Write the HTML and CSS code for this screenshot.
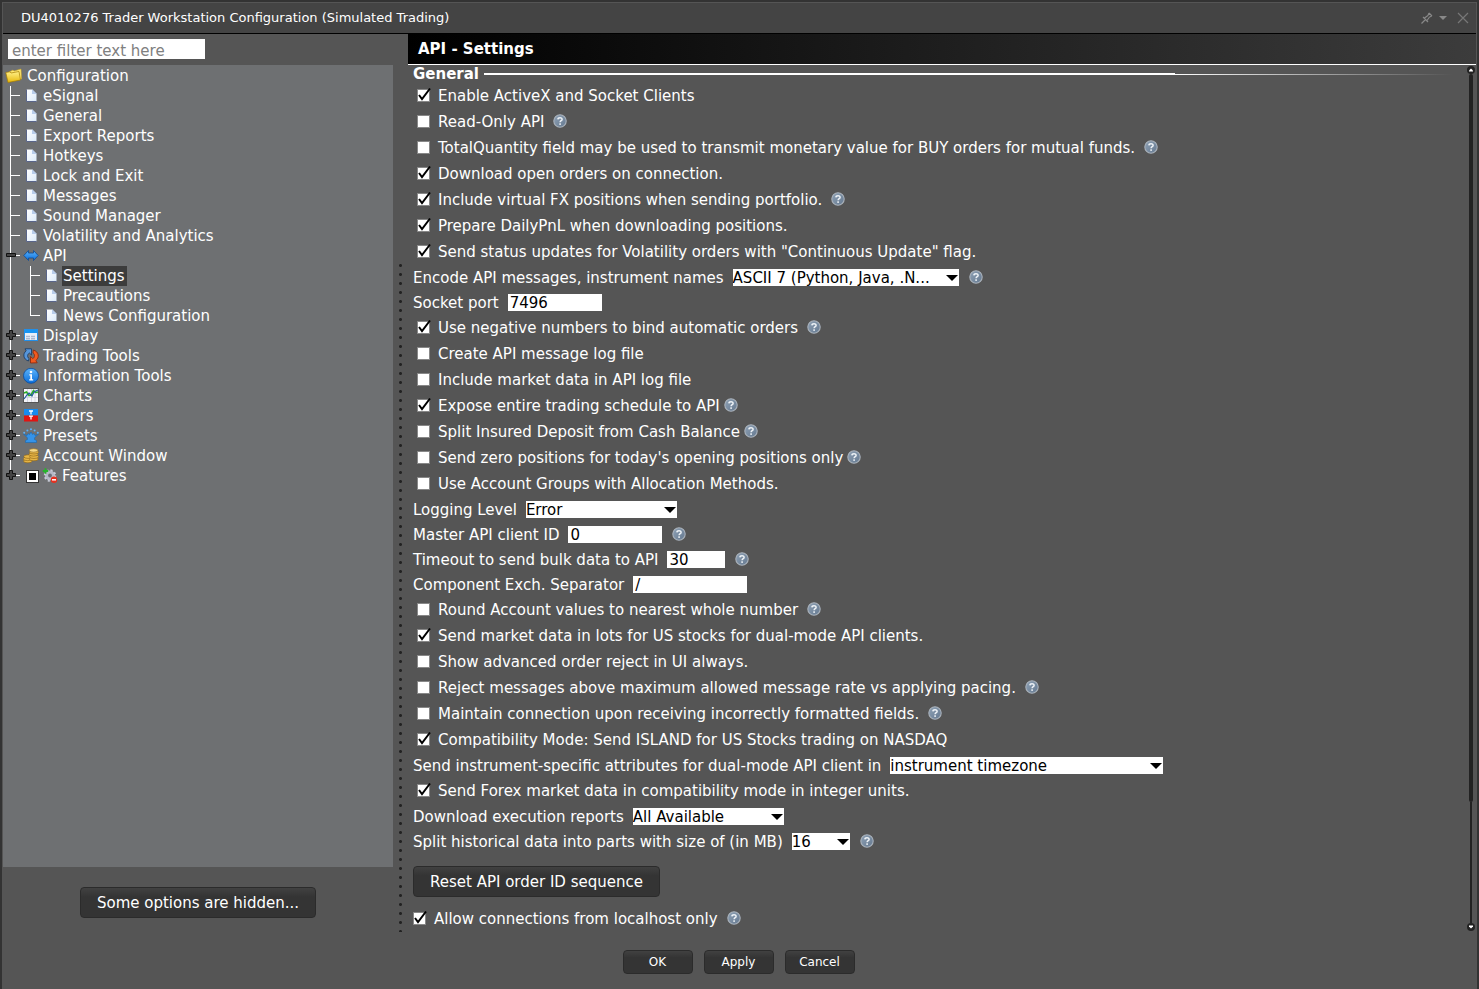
FILE: index.html
```html
<!DOCTYPE html>
<html lang="en">
<head>
<meta charset="utf-8">
<title>Trader Workstation Configuration</title>
<link rel="stylesheet" href="styles.css">
</head>
<body>
<svg class="defs" aria-hidden="true">
  <defs>
    <linearGradient id="g-help" x1="0" y1="0" x2="1" y2="1"><stop offset="0" stop-color="#8fa2b6"/><stop offset="1" stop-color="#64788f"/></linearGradient>
    <linearGradient id="g-page" x1="0" y1="0" x2="1" y2="1"><stop offset="0" stop-color="#fff"/><stop offset="1" stop-color="#dcebfa"/></linearGradient>
    <linearGradient id="g-folder" x1="0" y1="0" x2="0" y2="1"><stop offset="0" stop-color="#fff08a"/><stop offset="1" stop-color="#e8b90c"/></linearGradient>
    <linearGradient id="g-blue" x1="0" y1="0" x2="0" y2="1"><stop offset="0" stop-color="#5db4fa"/><stop offset="1" stop-color="#0b6fdc"/></linearGradient>
  </defs>
  <symbol id="help" viewBox="0 0 14 14"><circle cx="7" cy="7" r="6.2" fill="url(#g-help)" stroke="#aab2bb" stroke-width="1.1"/><path d="M4.9 5.4C5 3.3 9.1 3.2 9.1 5.4 9.1 6.7 7.1 6.7 7.1 8.3" fill="none" stroke="#eef2f6" stroke-width="1.5"/><rect x="6.3" y="9.3" width="1.6" height="1.6" fill="#eef2f6"/></symbol>
  <symbol id="page" viewBox="0 0 16 16"><path d="M3.5 1.5H9L13.5 6V13.5H3.5Z" fill="url(#g-page)"/><path d="M3.5 1.5V13.5H13.5" fill="none" stroke="#59658a"/><path d="M9 1V6H14Z" fill="#b9cdea"/></symbol>
  <symbol id="folder" viewBox="0 0 18 16"><path d="M4 4L8 2 9 3 16 1 16.5 11 5 13Z" fill="#ffe873" stroke="#c9a227" stroke-width=".6"/><path d="M.8 4.5L5 3.8 6 5 14 3.5 15.5 12 3 14.5Z" fill="url(#g-folder)" stroke="#a67c00" stroke-width=".7"/></symbol>
  <symbol id="plus" viewBox="0 0 12 12"><path d="M4.5 1.5H7.5V4.5H10.5V7.5H7.5V10.5H4.5V7.5H1.5V4.5H4.5Z" fill="#444" stroke="#111"/></symbol>
  <symbol id="minus" viewBox="0 0 12 12"><path d="M1.5 4.5H10.5V7.5H1.5Z" fill="#444" stroke="#111"/></symbol>
  <symbol id="api" viewBox="0 0 16 16"><path d="M.8 7.5L5.5 2.5V5H10.5V2.5L15.2 7.5 10.5 12.5V10H5.5V12.5Z" fill="url(#g-blue)" stroke="#194f91" stroke-width=".9"/></symbol>
  <symbol id="display" viewBox="0 0 16 16"><rect x="1.5" y="1.5" width="13" height="11" fill="#e6eef8" stroke="#238fe8"/><rect x="2" y="2" width="12" height="3" fill="#1695f3"/><path d="M3 8.5H13M3 10.8H13" stroke="#aab8ce" stroke-width="1.5" stroke-dasharray="4 1"/></symbol>
  <symbol id="trading" viewBox="0 0 16 16"><path d="M5.5 13C.2 11.5 -.5 5.5 3.2 2.8L2 .8H8.5V7L6.4 5C4.2 6.3 4 9 6 10.5Z" fill="#5795d8" stroke="#17365e" stroke-width=".8"/><path d="M10.3 2C16 3.5 16.8 9.8 12.8 12.5L14.2 14.8 7.5 15V8.5L9.9 10.7C12 9 12 6.3 10 5Z" fill="#f05a1f" stroke="#8c2408" stroke-width=".8"/></symbol>
  <symbol id="info" viewBox="0 0 16 16"><circle cx="8" cy="7.8" r="7.5" fill="url(#g-blue)" stroke="#074b9e" stroke-width=".8"/><circle cx="8" cy="4" r="1.3" fill="#fff"/><path d="M6.3 6.3H9V11.3H10.2V12.4H6.2V11.3H7.3V7.4H6.3Z" fill="#fff"/></symbol>
  <symbol id="charts" viewBox="0 0 16 16"><rect x=".5" y=".5" width="15" height="14" fill="#f4f4f8" stroke="#555"/><path d="M4.5 1V14M8.5 1V14M12 1V14M1 5H15M1 9.5H15" stroke="#c9cbdc" stroke-width=".7"/><path d="M1 5L3.5 4 6 7.5 8 7 10.5 2.5 12.5 4.5 15 4" fill="none" stroke="#2dae23" stroke-width="1.6"/><path d="M1 11L4 7 6 5 9 8 11 4 15 2" fill="none" stroke="#235e9e" stroke-width="1.2"/></symbol>
  <symbol id="orders" viewBox="0 0 16 16"><path d="M1 1H15V7.5H1Z" fill="#168bf0"/><path d="M1 7.5H15V13.5H1Z" fill="#e01512"/><path d="M6 3H10M8 3V6.5M6 8.2H10M8 8.2V11.5" stroke="#fff" stroke-width="1.3"/></symbol>
  <symbol id="presets" viewBox="0 0 16 16"><path d="M2.5 14.5V12.5L4.5 11.5C5 9 2.5 8 .5 6.2L4 7.5 5 5.5 6.5 6.5 8 4 9.5 6.5 11 5.5 12 7.5 15.5 6.2C13.5 8 11 9 11.5 11.5L13.5 12.5V14.5Z" fill="#3593e8" stroke="#1769b4" stroke-width=".6"/><g fill="#5cb2fa"><circle cx="1.2" cy="4.8" r="1"/><circle cx="4.4" cy="2.6" r="1"/><circle cx="8" cy="1.3" r="1"/><circle cx="11.6" cy="2.6" r="1"/><circle cx="14.8" cy="4.8" r="1"/></g></symbol>
  <symbol id="account" viewBox="0 0 16 16"><g fill="#e7b646" stroke="#8a6115" stroke-width=".6"><ellipse cx="4.8" cy="13" rx="4.3" ry="1.8"/><ellipse cx="4.5" cy="10.8" rx="4.2" ry="1.8"/><ellipse cx="5" cy="8.6" rx="4.2" ry="1.8"/><ellipse cx="10.8" cy="11" rx="4.5" ry="1.8"/><ellipse cx="11" cy="8.7" rx="4.5" ry="1.8"/><ellipse cx="10.5" cy="6.3" rx="4.5" ry="1.8"/><ellipse cx="11" cy="4.2" rx="4.5" ry="1.8"/><ellipse cx="10.6" cy="2.4" rx="4.3" ry="1.8" fill="#f6d987"/></g></symbol>
  <symbol id="features" viewBox="0 0 16 16"><circle cx="8" cy="7.5" r="5" fill="#b9bcc9" stroke="#c7cad6" stroke-width="2.4" stroke-dasharray="2 1.9"/><circle cx="8" cy="7.5" r="4.4" fill="#b5b8c6"/><circle cx="8" cy="7.5" r="1.9" fill="#6b6d78"/><path d="M3.5 .3V5.7M.8 3H6.2" stroke="#25b52b" stroke-width="1.8"/><circle cx="12" cy="11.8" r="3.2" fill="#e6301f"/><path d="M10 11.8H14" stroke="#fff" stroke-width="1.5"/></symbol>
</svg>

<div class="window">
  <header class="titlebar">
    <h1>DU4010276 Trader Workstation Configuration (Simulated Trading)</h1>
    <button class="tool" type="button" aria-label="Pin"><svg width="12" height="12" viewBox="0 0 12 12"><path d="M.5 11.5L4.5 7.5M2 5L7 10M3.5 6L7 3.5M6 8.5L8.5 5M7 3.5L8 1M8.5 5L11 4M8 1L11 4" fill="none" stroke="#888" stroke-width="1.2"/></svg></button>
    <button class="tool" type="button" aria-label="Options"><svg width="8" height="12" viewBox="0 0 8 12"><path d="M0 4H8L4 8Z" fill="#888"/></svg></button>
    <button class="tool close" type="button" aria-label="Close"><svg width="12" height="12" viewBox="0 0 12 12"><path d="M1 1L11 11M11 1L1 11" stroke="#777" stroke-width="1.2"/></svg></button>
  </header>

  <div class="main">
    <aside class="sidebar">
      <div class="filter"><input type="text" placeholder="enter filter text here" aria-label="Filter"></div>
      <nav class="tree">
        <div class="node root"><svg class="ficon"><use href="#folder"/></svg><span>Configuration</span></div>
        <ul>
          <li class="node"><i class="gut"></i><svg class="icon"><use href="#page"/></svg><span>eSignal</span></li>
          <li class="node"><i class="gut"></i><svg class="icon"><use href="#page"/></svg><span>General</span></li>
          <li class="node"><i class="gut"></i><svg class="icon"><use href="#page"/></svg><span>Export Reports</span></li>
          <li class="node"><i class="gut"></i><svg class="icon"><use href="#page"/></svg><span>Hotkeys</span></li>
          <li class="node"><i class="gut"></i><svg class="icon"><use href="#page"/></svg><span>Lock and Exit</span></li>
          <li class="node"><i class="gut"></i><svg class="icon"><use href="#page"/></svg><span>Messages</span></li>
          <li class="node"><i class="gut"></i><svg class="icon"><use href="#page"/></svg><span>Sound Manager</span></li>
          <li class="node"><i class="gut"></i><svg class="icon"><use href="#page"/></svg><span>Volatility and Analytics</span></li>
          <li class="node"><i class="gut"><svg class="toggle"><use href="#minus"/></svg></i><svg class="icon"><use href="#api"/></svg><span>API</span></li>
          <li class="node"><i class="gut through"></i><i class="gut"></i><svg class="icon"><use href="#page"/></svg><span class="selected">Settings</span></li>
          <li class="node"><i class="gut through"></i><i class="gut"></i><svg class="icon"><use href="#page"/></svg><span>Precautions</span></li>
          <li class="node"><i class="gut through"></i><i class="gut last"></i><svg class="icon"><use href="#page"/></svg><span>News Configuration</span></li>
          <li class="node"><i class="gut"><svg class="toggle"><use href="#plus"/></svg></i><svg class="icon"><use href="#display"/></svg><span>Display</span></li>
          <li class="node"><i class="gut"><svg class="toggle"><use href="#plus"/></svg></i><svg class="icon"><use href="#trading"/></svg><span>Trading Tools</span></li>
          <li class="node"><i class="gut"><svg class="toggle"><use href="#plus"/></svg></i><svg class="icon"><use href="#info"/></svg><span>Information Tools</span></li>
          <li class="node"><i class="gut"><svg class="toggle"><use href="#plus"/></svg></i><svg class="icon"><use href="#charts"/></svg><span>Charts</span></li>
          <li class="node"><i class="gut"><svg class="toggle"><use href="#plus"/></svg></i><svg class="icon"><use href="#orders"/></svg><span>Orders</span></li>
          <li class="node"><i class="gut"><svg class="toggle"><use href="#plus"/></svg></i><svg class="icon"><use href="#presets"/></svg><span>Presets</span></li>
          <li class="node"><i class="gut"><svg class="toggle"><use href="#plus"/></svg></i><svg class="icon"><use href="#account"/></svg><span>Account Window</span></li>
          <li class="node"><i class="gut last"><svg class="toggle"><use href="#plus"/></svg></i><input class="partial" type="checkbox" id="features-on"><svg class="icon"><use href="#features"/></svg><label for="features-on">Features</label></li>
        </ul>
      </nav>
      <div class="hidden-note"><button class="btn" type="button">Some options are hidden...</button></div>
    </aside>
    <div class="splitter"></div>

    <main class="pane">
      <h2>API - Settings</h2>
      <div class="scroll">
        <form class="settings">
          <div class="group"><h3>General</h3><i class="rule"></i><i class="rule-tail"></i></div>
          <div class="check"><input type="checkbox" id="c1" checked><label for="c1">Enable ActiveX and Socket Clients</label></div>
          <div class="check"><input type="checkbox" id="c2"><label for="c2">Read-Only API</label><svg class="help"><use href="#help"/></svg></div>
          <div class="check"><input type="checkbox" id="c3"><label for="c3">TotalQuantity field may be used to transmit monetary value for BUY orders for mutual funds.</label><svg class="help"><use href="#help"/></svg></div>
          <div class="check"><input type="checkbox" id="c4" checked><label for="c4">Download open orders on connection.</label></div>
          <div class="check"><input type="checkbox" id="c5" checked><label for="c5">Include virtual FX positions when sending portfolio.</label><svg class="help"><use href="#help"/></svg></div>
          <div class="check"><input type="checkbox" id="c6" checked><label for="c6">Prepare DailyPnL when downloading positions.</label></div>
          <div class="check"><input type="checkbox" id="c7" checked><label for="c7">Send status updates for Volatility orders with "Continuous Update" flag.</label></div>
          <div class="field"><label for="f1">Encode API messages, instrument names</label><select id="f1" class="w-l"><option>ASCII 7 (Python, Java, .N...</option></select><svg class="help"><use href="#help"/></svg></div>
          <div class="field"><label for="f2">Socket port</label><input type="text" id="f2" class="w-s" value="7496"></div>
          <div class="check"><input type="checkbox" id="c8" checked><label for="c8">Use negative numbers to bind automatic orders</label><svg class="help"><use href="#help"/></svg></div>
          <div class="check"><input type="checkbox" id="c9"><label for="c9">Create API message log file</label></div>
          <div class="check"><input type="checkbox" id="c10"><label for="c10">Include market data in API log file</label></div>
          <div class="check"><input type="checkbox" id="c11" checked><label for="c11">Expose entire trading schedule to API</label><svg class="help near"><use href="#help"/></svg></div>
          <div class="check"><input type="checkbox" id="c12"><label for="c12">Split Insured Deposit from Cash Balance</label><svg class="help near"><use href="#help"/></svg></div>
          <div class="check"><input type="checkbox" id="c13"><label for="c13">Send zero positions for today's opening positions only</label><svg class="help near"><use href="#help"/></svg></div>
          <div class="check"><input type="checkbox" id="c14"><label for="c14">Use Account Groups with Allocation Methods.</label></div>
          <div class="field"><label for="f3">Logging Level</label><select id="f3" class="w-m"><option>Error</option></select></div>
          <div class="field"><label for="f4">Master API client ID</label><input type="text" id="f4" class="w-s" value="0"><svg class="help"><use href="#help"/></svg></div>
          <div class="field"><label for="f5">Timeout to send bulk data to API</label><input type="text" id="f5" class="w-xs" value="30"><svg class="help"><use href="#help"/></svg></div>
          <div class="field"><label for="f6">Component Exch. Separator</label><input type="text" id="f6" class="w-sm" value="/"></div>
          <div class="check"><input type="checkbox" id="c15"><label for="c15">Round Account values to nearest whole number</label><svg class="help"><use href="#help"/></svg></div>
          <div class="check"><input type="checkbox" id="c16" checked><label for="c16">Send market data in lots for US stocks for dual-mode API clients.</label></div>
          <div class="check"><input type="checkbox" id="c17"><label for="c17">Show advanced order reject in UI always.</label></div>
          <div class="check"><input type="checkbox" id="c18"><label for="c18">Reject messages above maximum allowed message rate vs applying pacing.</label><svg class="help"><use href="#help"/></svg></div>
          <div class="check"><input type="checkbox" id="c19"><label for="c19">Maintain connection upon receiving incorrectly formatted fields.</label><svg class="help"><use href="#help"/></svg></div>
          <div class="check"><input type="checkbox" id="c20" checked><label for="c20">Compatibility Mode: Send ISLAND for US Stocks trading on NASDAQ</label></div>
          <div class="field"><label for="f7">Send instrument-specific attributes for dual-mode API client in</label><select id="f7" class="w-xl"><option>instrument timezone</option></select></div>
          <div class="check"><input type="checkbox" id="c21" checked><label for="c21">Send Forex market data in compatibility mode in integer units.</label></div>
          <div class="field"><label for="f8">Download execution reports</label><select id="f8" class="w-m"><option>All Available</option></select></div>
          <div class="field"><label for="f9">Split historical data into parts with size of (in MB)</label><select id="f9" class="w-xs"><option>16</option></select><svg class="help"><use href="#help"/></svg></div>
          <button class="btn reset" type="button">Reset API order ID sequence</button>
          <div class="check flush"><input type="checkbox" id="c22" checked><label for="c22">Allow connections from localhost only</label><svg class="help"><use href="#help"/></svg></div>
        </form>
        <div class="scrollbar" aria-hidden="true">
          <svg width="8" height="8" viewBox="0 0 8 8"><circle cx="4" cy="4" r="4" fill="#222"/><path d="M2 5.5V4.5L4 2.5 6 4.5V5.5Z" fill="#fff"/></svg>
          <div class="thumb"></div><div class="track"></div>
          <svg width="8" height="8" viewBox="0 0 8 8"><circle cx="4" cy="4" r="4" fill="#222"/><path d="M2 2.5V3.5L4 5.5 6 3.5V2.5Z" fill="#fff"/></svg>
        </div>
      </div>
    </main>
  </div>

  <footer class="actions">
    <button class="btn small" type="button">OK</button>
    <button class="btn small" type="button">Apply</button>
    <button class="btn small" type="button">Cancel</button>
  </footer>
</div>
</body>
</html>
```
FILE: styles.css
```css
* { box-sizing: border-box; }

body {
  margin: 0;
  background: #333;
  color: #fff;
  font: 15px/20px "DejaVu Sans", Verdana, sans-serif;
}

h1, h2, h3, ul { margin: 0; padding: 0; font-size: inherit; }
ul { list-style: none; }
svg { display: block; flex: none; }
input, select, button { font: inherit; margin: 0; }
label, h1, h2, h3, span { white-space: nowrap; }
.defs { position: absolute; width: 0; height: 0; }

.window {
  display: flex;
  flex-direction: column;
  min-height: 100vh;
  border: 2px solid #333;
  background: #555;
  padding: 1px 1px 0;
}

/* Title bar */
.titlebar {
  display: flex;
  align-items: center;
  height: 31px;
  padding: 0 7px 0 18px;
  background: #444;
  border-bottom: 1px solid #000;
}
.titlebar h1 { flex: 1; font-size: 13px; font-weight: normal; }
.tool { padding: 0; margin-left: 6px; border: 0; background: none; }
.tool.close { margin-left: 10px; }

.main { display: flex; flex: 1; }

/* Sidebar */
.sidebar { display: flex; flex-direction: column; width: 390px; }
.filter { height: 31px; padding: 5px; }
.filter input {
  display: block;
  width: 197px;
  height: 20px;
  padding: 3px 4px 0;
  border: 0;
  background: #fff;
}
.filter input::placeholder { color: #808080; opacity: 1; }

.tree { flex: 1; background: #6e7072; padding-top: 1px; }
.node { display: flex; align-items: center; height: 20px; }
.root { padding-left: 2px; gap: 4px; }
.ficon { width: 18px; height: 16px; }
.icon { width: 16px; height: 16px; margin-right: 4px; }
.gut {
  position: relative;
  width: 20px;
  height: 20px;
  background:
    linear-gradient(#fff, #fff) 7px 0 / 1px 20px no-repeat,
    linear-gradient(#fff, #fff) 7px 9px / 10px 1px no-repeat;
}
.gut.through { background-size: 1px 20px, 0 0; }
.gut.last { background-size: 1px 10px, 10px 1px; }
.toggle { position: absolute; left: 2px; top: 3px; width: 12px; height: 12px; }
.selected { background: #3c3c3c; margin-left: -1px; padding: 0 2px 0 1px; }
.partial {
  appearance: none;
  width: 13px;
  height: 13px;
  margin: 0 3px 0 3px;
  border: 3px solid #fff;
  outline: 1px solid #333;
  outline-offset: -1px;
  background: #000;
}
.hidden-note { display: flex; justify-content: center; padding: 20px 0 14px; }

.splitter {
  width: 15px;
  margin-top: 227px;
  background: radial-gradient(circle at 50% 50%, #222 0 1px, transparent 2px) 5px 0 / 5px 9px repeat-y;
}

/* Buttons */
.btn {
  padding: 0 16px;
  height: 31px;
  border: 1px solid #2b2b2b;
  border-radius: 4px;
  background: linear-gradient(#414141, #343434 30%);
  color: #fff;
}
.btn.small { width: 70px; height: 24px; padding: 0; font-size: 12px; }

/* Settings pane */
.pane { flex: 1; display: flex; flex-direction: column; }
.pane h2 {
  height: 31px;
  padding-left: 10px;
  border-bottom: 1px solid #fff;
  background: linear-gradient(90deg, #000, #3c3c3c);
  line-height: 30px;
}
.scroll { flex: 1; display: flex; }
.settings { flex: 1; padding-left: 5px; }
.group { display: flex; align-items: center; height: 18px; }
.rule { flex: 5; height: 2px; margin-left: 5px; background: #fff; }
.rule-tail { flex: 2; height: 1px; margin-right: 14px; background: linear-gradient(90deg, #fff, #555); }

.check, .field { display: flex; align-items: center; height: 25px; }
.check { margin-bottom: 1px; padding-left: 4px; gap: 7px; }
.check.flush { margin-top: 9px; padding-left: 0; }
.check input {
  appearance: none;
  width: 14px;
  height: 17px;
  background: url("data:image/svg+xml,%3Csvg xmlns='http://www.w3.org/2000/svg' width='14' height='17'%3E%3Crect x='.5' y='2.5' width='12' height='12' fill='white' stroke='%23888'/%3E%3C/svg%3E") no-repeat;
}
.check input:checked {
  background-image: url("data:image/svg+xml,%3Csvg xmlns='http://www.w3.org/2000/svg' width='14' height='17'%3E%3Crect x='.5' y='2.5' width='12' height='12' fill='white' stroke='%23888'/%3E%3Cpath d='M2 8L5 12 13 1.5' fill='none' stroke='black' stroke-width='2'/%3E%3C/svg%3E");
}
.help { width: 14px; height: 14px; margin: 0 0 2px; }
.check .help { margin-left: 2px; }
.check .help.near { margin-left: -3px; }

.field { gap: 9px; }
.field .help { margin-left: 1px; }
.field input, .field select {
  height: 17px;
  border: 0;
  border-radius: 0;
  background: #fff;
  color: #000;
  line-height: 17px;
}
.field input { padding: 2px 2px 0; }
.field select {
  appearance: none;
  padding: 1px 0 0;
  background: #fff url("data:image/svg+xml,%3Csvg xmlns='http://www.w3.org/2000/svg' width='12' height='6'%3E%3Cpath d='M0 0H12L6 6Z'/%3E%3C/svg%3E") right 1px center no-repeat;
}
.w-xs { width: 58px; }
.w-s { width: 94px; }
.w-sm { width: 114px; }
.w-m { width: 151px; }
.w-l { width: 226px; }
.w-xl { width: 273px; }
.reset { display: block; margin-top: 12px; }

.scrollbar { display: flex; flex-direction: column; align-items: center; width: 10px; padding: 1px 0 1px; }
.thumb { flex: 6; width: 4px; border-radius: 2px; background: #222; }
.track { flex: 1; width: 2px; background: #222; }

/* Footer */
.actions { display: flex; justify-content: center; gap: 11px; padding: 18px 2px 14px 0; }
.main { padding-bottom: 0; }
.window { padding-bottom: 1px; }
```
